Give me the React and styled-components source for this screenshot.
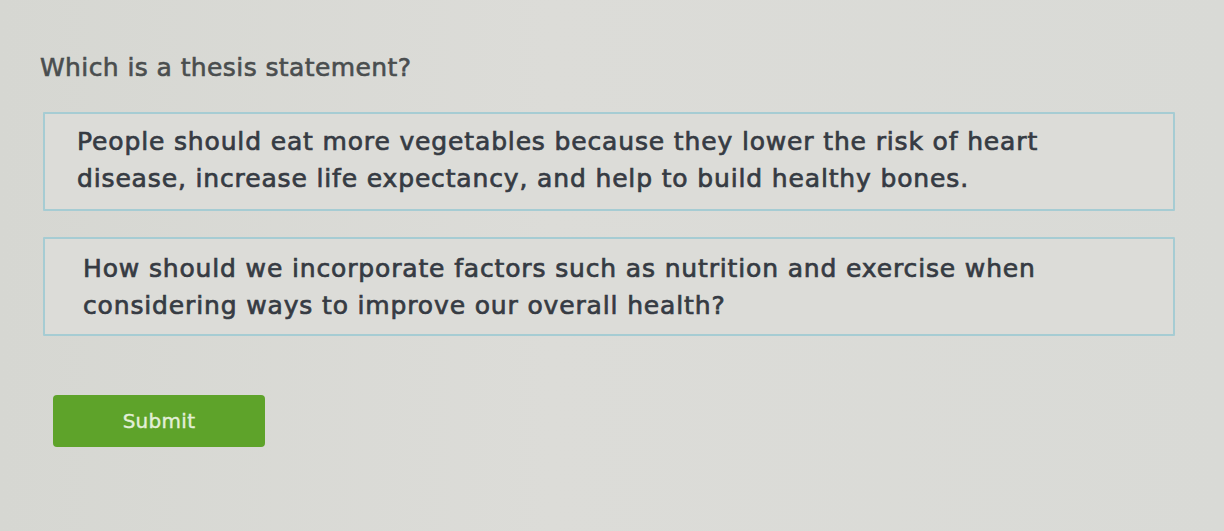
import React, { useState } from "react";
import styled, { createGlobalStyle } from "styled-components";

const GlobalStyle = createGlobalStyle`
  html, body {
    margin: 0;
    padding: 0;
    background: #d9d9d5;
  }
  body {
    font-family: "DejaVu Sans", Verdana, sans-serif;
  }
`;

const Page = styled.div`
  width: 1224px;
  height: 531px;
  box-sizing: border-box;
  padding: 50px 49px 0 43px;
  background: linear-gradient(90deg, #d6d7d2 0%, #dcdcd8 45%, #d9dad6 100%);
  overflow: hidden;
`;

const Question = styled.h1`
  margin: 0 0 26px -3px;
  font-size: 25px;
  font-weight: normal;
  letter-spacing: 0.4px;
  -webkit-text-stroke: 0.6px #4a4e4f;
  color: #4a4e4f;
  line-height: 36px;
`;

const Choices = styled.div`
  display: flex;
  flex-direction: column;
  gap: 26px;
`;

const Choice = styled.button`
  display: block;
  width: 100%;
  height: 99px;
  box-sizing: border-box;
  text-align: left;
  background: ${(p) => (p.selected ? "#d2e6ec" : "#dcdcd8")};
  border: 2px solid #a6ccd3;
  border-radius: 1px;
  padding: ${(p) => p.pad};
  font-family: inherit;
  font-size: 25px;
  line-height: 37px;
  letter-spacing: 0.85px;
  -webkit-text-stroke: 0.7px #363b43;
  color: #363b43;
  cursor: pointer;
`;

const Submit = styled.button`
  margin: 59px 0 0 10px;
  width: 212px;
  height: 52px;
  border: none;
  border-radius: 4px;
  background: #5ea32a;
  color: #e2efd8;
  font-family: inherit;
  font-size: 20px;
  letter-spacing: 0.3px;
  -webkit-text-stroke: 0.4px #e2efd8;
  padding: 0;
  cursor: pointer;
`;

const choices = [
  {
    text: "People should eat more vegetables because they lower the risk of heart disease, increase life expectancy, and help to build healthy bones.",
    pad: "8px 50px 12px 32px",
  },
  {
    text: "How should we incorporate factors such as nutrition and exercise when considering ways to improve our overall health?",
    pad: "10px 50px 10px 38px",
  },
];

export default function App() {
  const [selected, setSelected] = useState(null);
  return (
    <>
      <GlobalStyle />
      <Page>
        <Question>Which is a thesis statement?</Question>
        <Choices>
          {choices.map((c, i) => (
            <Choice
              key={i}
              pad={c.pad}
              selected={selected === i}
              onClick={() => setSelected(i)}
            >
              {c.text}
            </Choice>
          ))}
        </Choices>
        <Submit>Submit</Submit>
      </Page>
    </>
  );
}
